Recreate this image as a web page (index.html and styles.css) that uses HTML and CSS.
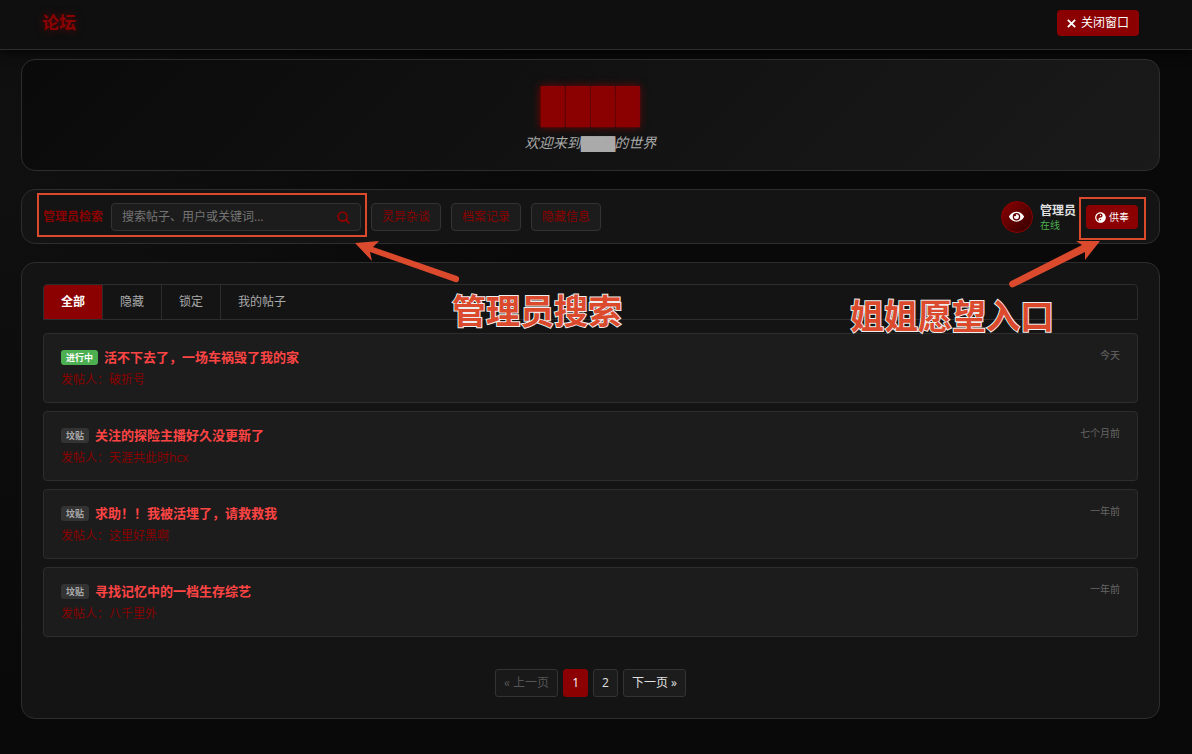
FILE: index.html
```html
<!DOCTYPE html>
<html lang="zh-CN">
<head>
    <meta charset="UTF-8">
    <meta name="viewport" content="width=device-width, initial-scale=1.0">
    <title>论坛</title>
    <link rel="stylesheet" href="styles.css">
</head>
<body>
    <header class="header">
        <h1 class="logo">论坛</h1>
        <button type="button" class="btn btn-close">
            <svg class="icon" viewBox="0 0 12 12" aria-hidden="true"><path d="M2 2l8 8M10 2l-8 8" fill="none" stroke="currentColor" stroke-width="2"/></svg>
            关闭窗口
        </button>
    </header>

    <main class="container">
        <section class="panel banner">
            <h2 class="banner-title">████</h2>
            <p class="banner-subtitle">欢迎来到<span class="censored">████</span>的世界</p>
        </section>

        <section class="panel toolbar">
            <form class="search">
                <label for="search">管理员检索</label>
                <div class="search-box">
                    <input type="text" id="search" placeholder="搜索帖子、用户或关键词...">
                    <button type="submit" class="search-btn" aria-label="搜索">
                        <svg viewBox="0 0 14 14" aria-hidden="true"><circle cx="6" cy="6" r="4.8"/><path d="M9.4 9.4L13.4 13.4"/></svg>
                    </button>
                </div>
            </form>
            <div class="categories">
                <button type="button" class="category">灵异杂谈</button>
                <button type="button" class="category">档案记录</button>
                <button type="button" class="category">隐藏信息</button>
            </div>
            <div class="user">
                <div class="avatar">
                    <svg viewBox="0 0 576 512" aria-hidden="true"><path fill="currentColor" d="M572.52 241.4C518.29 135.59 410.93 64 288 64S57.68 135.64 3.48 241.41a32.35 32.35 0 0 0 0 29.19C57.71 376.41 165.07 448 288 448s230.32-71.64 284.52-177.41a32.35 32.35 0 0 0 0-29.19zM288 400a144 144 0 1 1 144-144 143.93 143.93 0 0 1-144 144zm0-240a95.31 95.31 0 0 0-25.31 3.79 47.85 47.85 0 0 1-66.9 66.9A95.78 95.78 0 1 0 288 160z"/></svg>
                </div>
                <div class="user-info">
                    <div class="user-name">管理员</div>
                    <div class="user-status">在线</div>
                </div>
                <button type="button" class="btn btn-offer">
                    <svg class="icon" viewBox="0 0 496 512" aria-hidden="true"><path fill="currentColor" d="M248 8C111.03 8 0 119.03 0 256s111.03 248 248 248 248-111.03 248-248S384.97 8 248 8zm0 376c-17.67 0-32-14.33-32-32s14.33-32 32-32 32 14.33 32 32-14.33 32-32 32zm0-128c-53.02 0-96 42.98-96 96s42.98 96 96 96c-106.04 0-192-85.96-192-192S141.96 64 248 64c53.02 0 96 42.98 96 96s-42.98 96-96 96zm0-128c-17.67 0-32 14.33-32 32s14.33 32 32 32 32-14.33 32-32-14.33-32-32-32z"/></svg>
                    供奉
                </button>
            </div>

            <!-- guide notes on top of the toolbar -->
            <div class="note note-search">
                <div class="note-frame"></div>
                <svg class="note-arrow" viewBox="0 0 104 42" aria-hidden="true"><path d="M0 2L24 0L18 6L102 35A3 3 0 0 1 100 41L15 11L17 20Z"/></svg>
                <div class="note-text">管理员搜索</div>
            </div>
            <div class="note note-offer">
                <div class="note-frame"></div>
                <svg class="note-arrow" viewBox="0 0 92 48" aria-hidden="true"><path d="M91 0L67 0L73 4L2 40A3 3 0 0 0 5 46L76 11L76 19Z"/></svg>
                <div class="note-text">姐姐愿望入口</div>
            </div>
        </section>

        <section class="panel board">
            <nav class="tabs">
                <button type="button" class="tab active">全部</button>
                <button type="button" class="tab">隐藏</button>
                <button type="button" class="tab">锁定</button>
                <button type="button" class="tab">我的帖子</button>
            </nav>

            <div class="posts">
                <article class="post">
                    <div class="post-main">
                        <h3 class="post-title"><span class="tag tag-live">进行中</span>活不下去了，一场车祸毁了我的家</h3>
                        <p class="post-author">发帖人：破折号</p>
                    </div>
                    <span class="post-time">今天</span>
                </article>
                <article class="post">
                    <div class="post-main">
                        <h3 class="post-title"><span class="tag">坟贴</span>关注的探险主播好久没更新了</h3>
                        <p class="post-author">发帖人：天涯共此时hcx</p>
                    </div>
                    <span class="post-time">七个月前</span>
                </article>
                <article class="post">
                    <div class="post-main">
                        <h3 class="post-title"><span class="tag">坟贴</span>求助！！我被活埋了，请救救我</h3>
                        <p class="post-author">发帖人：这里好黑啊</p>
                    </div>
                    <span class="post-time">一年前</span>
                </article>
                <article class="post">
                    <div class="post-main">
                        <h3 class="post-title"><span class="tag">坟贴</span>寻找记忆中的一档生存综艺</h3>
                        <p class="post-author">发帖人：八千里外</p>
                    </div>
                    <span class="post-time">一年前</span>
                </article>
            </div>

            <div class="pagination">
                <button type="button" class="page" disabled>« 上一页</button>
                <button type="button" class="page active">1</button>
                <button type="button" class="page">2</button>
                <button type="button" class="page">下一页 »</button>
            </div>
        </section>
    </main>
</body>
</html>
```
FILE: styles.css
```css
* {
    box-sizing: border-box;
    margin: 0;
    padding: 0;
}
body {
    font-family: "Open Sans", "Noto Sans CJK SC", sans-serif;
    font-size: 12px;
    line-height: 20px;
    color: #e0e0e0;
    background: radial-gradient(circle at 0 20%, #101010, #090909 40%) #090909;
    min-height: 100vh;
}
button, input {
    font-family: inherit;
    font-size: 12px;
    line-height: 20px;
}
button {
    cursor: pointer;
}
.header {
    display: flex;
    justify-content: space-between;
    align-items: center;
    padding: 10px 53px 13px 42px;
    background-color: #0f0f0f;
    border-bottom: 1px solid #2d2d2d;
    box-shadow: 0 2px 10px rgba(0, 0, 0, 0.8);
}
.logo {
    font-size: 17px;
    line-height: 26px;
    color: #8b0000;
    text-shadow: 0 0 8px rgba(139, 0, 0, 0.6);
}
.btn {
    display: flex;
    align-items: center;
    gap: 4px;
    color: #fff;
    background-color: #8b0000;
    border: none;
    border-radius: 4px;
}
.icon {
    width: 11px;
    height: 11px;
}
.btn-close {
    padding: 3px 10px 3px 9px;
}
.container {
    display: flex;
    flex-direction: column;
    gap: 18px;
    padding: 9px 32px 36px 21px;
}
.panel {
    background-color: #141414;
    border: 1px solid #2d2d2d;
    border-radius: 14px;
}
.banner {
    padding: 25px 20px 13px;
    text-align: center;
    background: linear-gradient(135deg, #0a0a0a, #1a1a1a);
}
.banner-title {
    font-family: "Liberation Sans", sans-serif;
    font-size: 34px;
    font-weight: normal;
    line-height: 40px;
    letter-spacing: 1px;
    color: #8b0000;
    text-shadow: 0 0 9px rgba(139, 0, 0, 0.8);
}
.banner-subtitle {
    margin-top: 5px;
    font-size: 14px;
    line-height: 25px;
    font-style: italic;
    color: #aaa;
}
.censored {
    font-family: "Liberation Mono", monospace;
    text-shadow: 1px 0 #aaa;
}

/* toolbar */
.toolbar {
    position: relative;
    display: flex;
    align-items: center;
    gap: 10px;
    padding: 11px 21px 10px;
}
.search {
    display: flex;
    align-items: center;
    gap: 8px;
}
.search label {
    color: #8b0000;
    font-weight: bold;
}
.search-box {
    display: flex;
    width: 250px;
    height: 28px;
    background-color: #1c1c1c;
    border: 1px solid #333;
    border-radius: 4px;
}
.search-box input {
    flex: 1;
    min-width: 0;
    padding: 0 10px;
    color: #e0e0e0;
    background: none;
    border: none;
    outline: none;
}
.search-box input::placeholder {
    color: #757575;
}
.search-btn {
    display: flex;
    align-items: center;
    padding: 0 10px;
    background: none;
    border: none;
}
.search-btn svg {
    width: 13px;
    height: 13px;
    fill: none;
    stroke: #8b0000;
    stroke-width: 2;
}
.categories {
    display: flex;
    gap: 10px;
}
.category {
    padding: 3px 10px;
    color: #8b0000;
    background-color: #1c1c1c;
    border: 1px solid #333;
    border-radius: 4px;
}
.user {
    display: flex;
    align-items: center;
    margin-left: auto;
}
.avatar {
    display: flex;
    align-items: center;
    justify-content: center;
    width: 32px;
    height: 32px;
    margin-right: 7px;
    color: #fff;
    background: linear-gradient(135deg, #8b0000, #300);
    border: 1px solid #8b0000;
    border-radius: 50%;
}
.avatar svg {
    width: 15px;
}
.user-info {
    margin-right: 10px;
}
.user-name {
    font-weight: bold;
    line-height: 16px;
}
.user-status {
    font-size: 10px;
    line-height: 13px;
    color: #4caf50;
}
.btn-offer {
    gap: 3px;
    padding: 2px 9px;
    font-size: 10px;
}

/* guide notes */
.note {
    position: absolute;
    top: 0;
    z-index: 1;
    color: #dc4a2d;
    pointer-events: none;
}
.note-search {
    left: 0;
}
.note-offer {
    right: 0;
}
.note-frame,
.note-arrow,
.note-text {
    position: absolute;
}
.note-frame {
    border: 2px solid #dc4a2d;
}
.note-arrow {
    fill: currentColor;
}
.note-text {
    font-size: 34px;
    font-weight: bold;
    line-height: 40px;
    white-space: nowrap;
    -webkit-text-stroke: 2px #eee;
    paint-order: stroke fill;
}
.note-search .note-frame {
    top: 3px;
    left: 15px;
    width: 330px;
    height: 44px;
}
.note-search .note-arrow {
    top: 51px;
    left: 333px;
    width: 104px;
}
.note-search .note-text {
    top: 101px;
    left: 430px;
}
.note-offer .note-frame {
    top: 7px;
    right: 13px;
    width: 67px;
    height: 43px;
}
.note-offer .note-arrow {
    top: 51px;
    right: 58px;
    width: 92px;
}
.note-offer .note-text {
    top: 106px;
    right: 105px;
}

/* post list */
.board {
    padding: 21px;
}
.tabs {
    display: flex;
    border: 1px solid #2d2d2d;
    border-radius: 4px 4px 0 0;
    overflow: hidden;
}
.tab {
    padding: 7px 17px;
    color: #aaa;
    background: none;
    border: none;
    border-right: 1px solid #2d2d2d;
}
.tab:last-child {
    border-right: none;
}
.tab.active {
    color: #fff;
    font-weight: bold;
    background-color: #8b0000;
}
.posts {
    display: flex;
    flex-direction: column;
    gap: 8px;
    margin-top: 13px;
}
.post {
    display: flex;
    justify-content: space-between;
    padding: 13px 17px 12px;
    background-color: #1c1c1c;
    border: 1px solid #2d2d2d;
    border-radius: 4px;
}
.post-title {
    display: flex;
    align-items: center;
    gap: 6px;
    font-size: 13px;
    line-height: 20px;
    color: #ff4444;
}
.tag {
    padding: 0 5px;
    font-size: 9px;
    line-height: 15px;
    color: #aaa;
    background-color: #333;
    border-radius: 3px;
}
.tag-live {
    color: #fff;
    background-color: #4caf50;
}
.post-author {
    margin-top: 3px;
    color: #8b0000;
}
.post-time {
    font-size: 10px;
    line-height: 16px;
    color: #666;
}
.pagination {
    display: flex;
    justify-content: center;
    gap: 5px;
    margin-top: 32px;
}
.page {
    padding: 3px 8px;
    color: #e0e0e0;
    background-color: #1c1c1c;
    border: 1px solid #333;
    border-radius: 3px;
}
.page.active {
    color: #fff;
    background-color: #8b0000;
    border-color: #8b0000;
}
.page:disabled {
    color: #555;
    background-color: #191919;
    cursor: default;
}
```
